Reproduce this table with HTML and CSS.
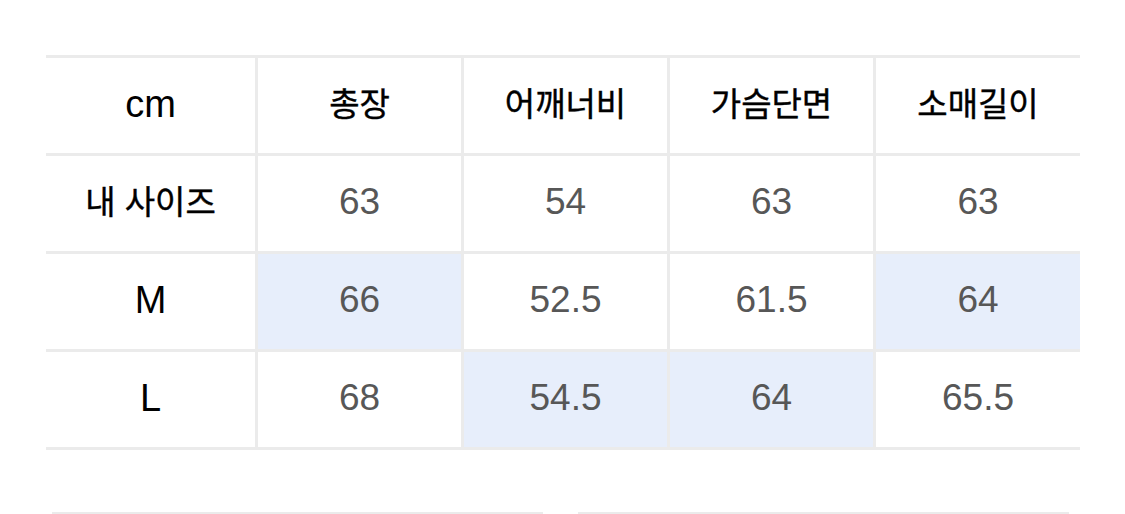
FILE: index.html
```html
<!DOCTYPE html>
<html lang="ko">
<head>
<meta charset="utf-8">
<link rel="stylesheet" href="styles.css">
</head>
<body>
<div class="page">
  <div class="size-table">
    <div class="cell head"><span class="lat">cm</span></div>
    <div class="cell head"><span class="ko">총장</span></div>
    <div class="cell head"><span class="ko">어깨너비</span></div>
    <div class="cell head"><span class="ko">가슴단면</span></div>
    <div class="cell head"><span class="ko">소매길이</span></div>

    <div class="cell head"><span class="ko">내 사이즈</span></div>
    <div class="cell val">63</div>
    <div class="cell val">54</div>
    <div class="cell val">63</div>
    <div class="cell val">63</div>

    <div class="cell head"><span class="lat">M</span></div>
    <div class="cell val hl">66</div>
    <div class="cell val">52.5</div>
    <div class="cell val">61.5</div>
    <div class="cell val hl">64</div>

    <div class="cell head"><span class="lat">L</span></div>
    <div class="cell val">68</div>
    <div class="cell val hl">54.5</div>
    <div class="cell val hl">64</div>
    <div class="cell val">65.5</div>
  </div>
  <div class="actions">
    <div class="btn"></div>
    <div class="btn"></div>
  </div>
</div>
</body>
</html>
```

FILE: styles.css
```css
html, body {
  margin: 0;
  padding: 0;
  background: #ffffff;
}
body {
  width: 1125px;
  height: 514px;
  overflow: hidden;
  font-family: "Liberation Sans", "Noto Sans CJK KR", sans-serif;
}
.page {
  padding: 55px 0 0 46px;
}
.size-table {
  display: grid;
  width: 1034px;
  grid-template-columns: 209px 203px 203px 203px 204px;
  grid-auto-rows: 95px;
  gap: 3px;
  background: #ebebeb;
  border-top: 3px solid #ebebeb;
  border-bottom: 3px solid #ebebeb;
}
.cell {
  background: #ffffff;
  display: flex;
  align-items: center;
  justify-content: center;
}
.head {
  color: #000000;
}
.lat {
  font-size: 38px;
  font-family: "Liberation Sans", sans-serif;
  margin-top: -3px;
}
.ko {
  font-size: 33px;
  font-weight: 400;
  font-family: "Noto Sans CJK KR", sans-serif;
  margin-top: -7px;
  -webkit-text-stroke: 0.4px #000000;
}
.val {
  font-size: 37px;
  color: #575757;
  font-family: "Liberation Sans", sans-serif;
  padding-bottom: 4px;
}
.hl {
  background: #e7eefb;
}
.actions {
  display: flex;
  gap: 35px;
  margin-top: 62px;
  margin-left: 6px;
}
.btn {
  width: 491px;
  height: 0;
  border-top: 2px solid #ebebeb;
}
```
